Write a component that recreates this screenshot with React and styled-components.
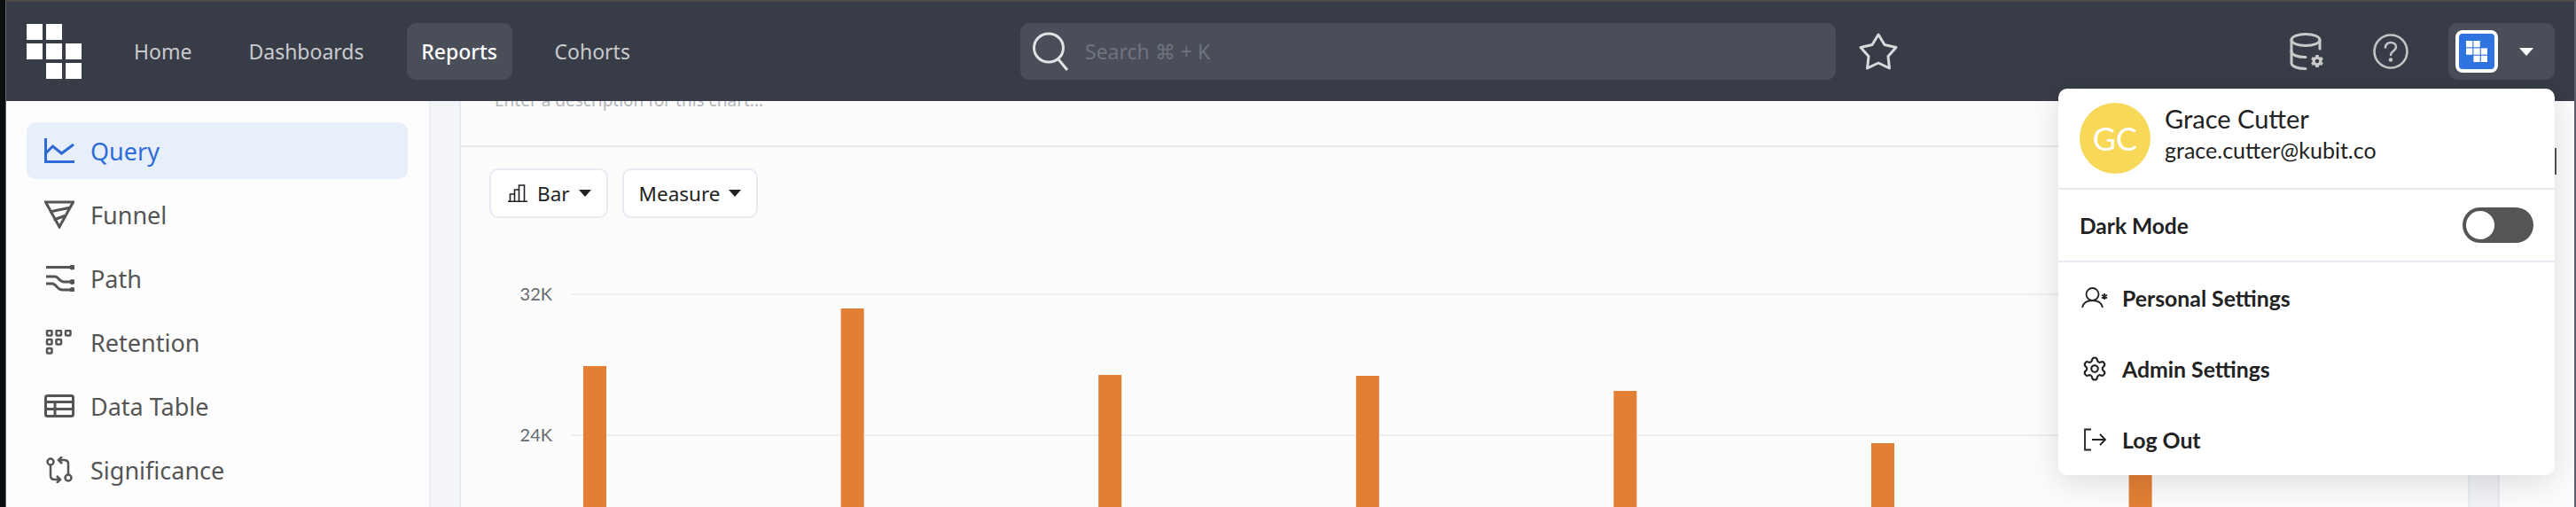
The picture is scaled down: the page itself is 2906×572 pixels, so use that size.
import { Settings } from "lucide-react"
import styled, { createGlobalStyle } from "styled-components"

const GlobalStyle = createGlobalStyle`
html, body {
  margin: 0;
  padding: 0;
  background: #000;
}
* {
  box-sizing: border-box;
}
`

const Page = styled.div`
position: relative;
width: 2906px;
height: 572px;
overflow: hidden;
padding-left: 6px;
background-color: #0c0d0e;
font-family: "Noto Sans", sans-serif;
`
const Win = styled.div`
display: flex;
flex-direction: column;
height: 100%;
border-top: 2px solid #4a4a42;
border-left: 1px solid #60646c;
border-right: 2px solid #5c606a;
`
const NavBar = styled.header`
display: flex;
align-items: center;
flex: 0 0 112px;
padding: 0 22px 0 23px;
background-color: #383c47;
`
const NavLeft = styled.div`
display: flex;
align-items: center;
flex: 0 0 1121px;
`
const NavItems = styled.nav`
display: flex;
gap: 32px;
margin-left: 43px;
`
const NavItem = styled.a`
display: flex;
align-items: center;
justify-content: center;
height: 64px;
min-width: ${p => (p.$active ? "119px" : "auto")};
padding: 0 16px;
border-radius: 10px;
font-size: 23px;
font-weight: ${p => (p.$active ? 500 : 400)};
color: ${p => (p.$active ? "#ffffff" : "#c9cbcf")};
background-color: ${p => (p.$active ? "#4a4e59" : "transparent")};
`
const SearchBar = styled.div`
display: flex;
align-items: center;
flex: 0 0 920px;
height: 64px;
padding-left: 14px;
border-radius: 10px;
background-color: #4a4e59;
`
const SearchText = styled.span`
margin-left: 17px;
font-size: 23px;
color: #6f737d;
`
const StarBtn = styled.svg`
margin-left: 26px;
`
const NavRight = styled.div`
display: flex;
align-items: center;
margin-left: auto;
`
const IconSlot = styled.div`
display: flex;
margin-right: ${p => p.$gap}px;
`
const UserPill = styled.div`
display: flex;
align-items: center;
width: 120px;
height: 64px;
padding-left: 8px;
border-radius: 10px;
background-color: #4a4e59;
`
const LogoTile = styled.div`
display: flex;
align-items: center;
justify-content: center;
width: 48px;
height: 48px;
border: 4px solid #ffffff;
border-radius: 8px;
background-color: #2f73e0;
`
const WhiteCaret = styled.span`
margin-left: 24px;
border-left: 8px solid transparent;
border-right: 8px solid transparent;
border-top: 9px solid #ffffff;
`

const Body = styled.main`
display: flex;
flex: 1;
min-height: 0;
`
const Sidebar = styled.aside`
flex: 0 0 479px;
padding: 24px 24px 0 23px;
border-right: 2px solid #eceef3;
background-color: #fdfdfd;
`
const SideItem = styled.a`
display: flex;
align-items: center;
height: 64px;
margin-bottom: 8px;
padding-left: 20px;
border-radius: 10px;
font-size: 27px;
color: ${p => (p.$active ? "#2f6bd6" : "#555555")};
background-color: ${p => (p.$active ? "#e7effa" : "transparent")};
`
const SideIcon = styled.svg`
flex: 0 0 34px;
margin-right: 18px;
fill: none;
stroke: currentColor;
stroke-width: 3;
`
const Gutter = styled.div`
flex: 0 0 34px;
border-right: 2px solid #e8eaf2;
background-color: #f4f5f8;
`
const Card = styled.section`
flex: 0 0 2264px;
overflow: hidden;
background-color: #fcfcfc;
`
const DescArea = styled.div`
display: flex;
height: 52px;
padding-left: 38px;
border-bottom: 2px solid #e8eaf2;
`
const Desc = styled.div`
margin-top: -16px;
line-height: 30px;
font-size: 19px;
color: #b4b6ba;
`
const Toolbar = styled.div`
display: flex;
gap: 16px;
padding: 24px 32px 0;
`
const ToolButton = styled.button`
display: flex;
align-items: center;
height: 56px;
padding: 0 17px;
border: 2px solid #e8eaf2;
border-radius: 10px;
background-color: #ffffff;
font-family: "Noto Sans", sans-serif;
font-size: 22.5px;
color: #222222;
`
const DarkCaret = styled.span`
margin-left: 10px;
border-left: 7px solid transparent;
border-right: 7px solid transparent;
border-top: 8px solid #222222;
`
const BarGlyph = styled.svg`
margin: 0 11px 0 2px;
fill: none;
stroke: #222222;
stroke-width: 1.6;
`
const Chart = styled.svg`
display: block;
`
const AxisLabel = styled.text`
font-family: "Lato", sans-serif;
font-size: 20px;
fill: #666a70;
`
const RightGutter = styled(Gutter)`
flex-basis: 36px;
border-left: 2px solid #e8eaf2;
border-right: 2px solid #e8eaf2;
background-color: #f1f2f5;
`
const RightPanel = styled.div`
flex: 1;
padding: 53px 0 0 24px;
background-color: #fcfcfc;
`
const Handle = styled.div`
width: 40px;
height: 30px;
background-color: #555555;
`

const Menu = styled.div`
position: absolute;
top: 100px;
right: 24px;
width: 560px;
height: 436px;
border-radius: 10px;
background-color: #ffffff;
box-shadow: 0 8px 36px rgba(0, 0, 0, 0.13);
font-family: "Lato", sans-serif;
color: #222222;
`
const UserRow = styled.div`
display: flex;
align-items: center;
height: 114px;
padding: 0 24px;
border-bottom: 2px solid #e8eaf2;
`
const Avatar = styled.div`
display: flex;
align-items: center;
justify-content: center;
width: 80px;
height: 80px;
border-radius: 50%;
background-color: #f7d858;
font-size: 36px;
color: #ffffff;
`
const UserInfo = styled.div`
margin-left: 16px;
padding-bottom: 10px;
`
const UserName = styled.div`
font-size: 29px;
line-height: 36px;
`
const UserMail = styled.div`
font-size: 25px;
line-height: 34px;
`
const ThemeRow = styled.div`
display: flex;
align-items: center;
justify-content: space-between;
height: 82px;
padding: 0 24px;
border-bottom: 2px solid #e8eaf2;
font-size: 24.5px;
font-weight: 700;
`
const Toggle = styled.div`
display: flex;
align-items: center;
width: 80px;
height: 40px;
padding-left: 4px;
border-radius: 20px;
background-color: #555555;
`
const Knob = styled.div`
width: 32px;
height: 32px;
border-radius: 50%;
background-color: #ffffff;
`
const MenuItem = styled.a`
display: flex;
align-items: center;
height: 80px;
padding-left: 25px;
font-size: 24.8px;
font-weight: 700;
`
const MenuIcon = styled.div`
display: flex;
justify-content: center;
flex: 0 0 32px;
margin-right: 15px;
`

const Logo = ({ size, cell, pitch }) => (
  <svg width={size} height={size} viewBox={`0 0 ${size} ${size}`} fill="#ffffff">
    {[[0, 0], [1, 0], [0, 1], [1, 1], [2, 1], [1, 2], [2, 2]].map(([c, r]) => (
      <rect key={`${c}-${r}`} x={c * pitch} y={r * pitch} width={cell} height={cell} />
    ))}
  </svg>
)

const SearchIcon = () => (
  <svg width="42" height="44" viewBox="0 0 42 44" fill="none" stroke="#e2e3e4" strokeWidth="3">
    <ellipse cx="18" cy="18" rx="16.5" ry="16" />
    <path d="M29 31l10 12" />
  </svg>
)

const DbIcon = () => (
  <svg width="40" height="42" viewBox="0 0 40 42" fill="none" stroke="#c9c9c9" strokeWidth="3" strokeLinecap="round">
    <ellipse cx="18" cy="8" rx="16" ry="6.500" />
    <path d="M34 8v10M2 8v26c0 4 7 6.500 16 6.500" />
    <path d="M2 21c0 4 7 6.500 16 6.500" />
    <path d="M31 25v14M25 28.500l12 7M37 28.500l-12 7" strokeWidth="3.600" strokeLinecap="butt" />
    <circle cx="31" cy="32" r="5.500" fill="#c9c9c9" stroke="none" />
    <circle cx="31" cy="32" r="2.300" fill="#383c47" stroke="none" />
  </svg>
)

const HelpIcon = () => (
  <svg width="40" height="40" viewBox="0 0 40 40" fill="none" stroke="#c4c4c4" strokeWidth="2.600" strokeLinecap="round">
    <circle cx="20" cy="20" r="18.500" />
    <path d="M14 15.500c0-3.500 2.800-5.500 6-5.500s6 2 6 5c0 4.500-6 4.500-6 9" />
    <circle cx="20" cy="29.500" r="1" fill="#c4c4c4" />
  </svg>
)

const sideItems = [
  {
    label: "Query",
    h: 28,
    icon: <path d="M1.500 0v26.500H34M1.500 17l8-8 10 8L33 7" />,
  },
  {
    label: "Funnel",
    h: 32,
    icon: <path d="M1.500 2h31L17 30zM6 13l24-5M10.500 22l14-5" />,
  },
  {
    label: "Path",
    h: 30,
    icon: (
      <g transform="translate(2 0)">
        <path d="M0 2.500h30M0 13h10c4 0 5 6 10 6h10M0 21h7c4 0 6 7 11 7h12" />
        <circle cx="29.500" cy="2.500" r="1.500" />
        <circle cx="29.500" cy="19" r="1.500" />
        <circle cx="29.500" cy="28" r="1.500" />
      </g>
    ),
  },
  {
    label: "Retention",
    h: 28,
    icon: (
      <g strokeWidth="2.500" transform="translate(3 1)">
        {[[0, 0], [10.500, 0], [21, 0], [0, 10], [10.500, 10], [0, 20]].map(([x, y]) => (
          <rect key={`${x}-${y}`} x={x} y={y} width="5.500" height="5.500" rx="1" />
        ))}
      </g>
    ),
  },
  {
    label: "Data Table",
    h: 26,
    icon: (
      <g>
        <rect x="1.500" y="1.500" width="31" height="23" rx="2" />
        <path d="M1.500 8.500h31M1.500 16.500h31M12 8.500v16" />
      </g>
    ),
  },
  {
    label: "Significance",
    h: 30,
    icon: (
      <g strokeWidth="2.500" transform="translate(2 1)">
        <circle cx="5" cy="5" r="3.500" />
        <circle cx="25" cy="23" r="3.500" />
        <path d="M5 9v12c0 3 2 4 5 4h6M12 21l4 4-4 4M25 19V7c0-3-2-4-5-4h-6M18 7l-4-4 4-4" />
      </g>
    ),
  },
]

const bars = [167, 102, 177, 178, 195, 254, 150]
const ticks = [{ y: 86, label: "32K" }, { y: 245, label: "24K" }]

const App = () => {
  return (
    <Page>
      <GlobalStyle />
      <Win>
        <NavBar>
          <NavLeft>
            <Logo size={62} cell={18} pitch={22} />
            <NavItems>
              <NavItem>Home</NavItem>
              <NavItem>Dashboards</NavItem>
              <NavItem $active>Reports</NavItem>
              <NavItem>Cohorts</NavItem>
            </NavItems>
          </NavLeft>
          <SearchBar>
            <SearchIcon />
            <SearchText>Search ⌘ + K</SearchText>
          </SearchBar>
          <StarBtn width="44" height="42" viewBox="0 0 44 42" fill="none" stroke="#d8d9db" strokeWidth="3" strokeLinejoin="round">
            <path d="M22 2l7 11.500 13 3-9 10 1.500 13.500L22 34 9.500 40 11 26.500l-9-10 13-3z" />
          </StarBtn>
          <NavRight>
            <IconSlot $gap={54}><DbIcon /></IconSlot>
            <IconSlot $gap={45}><HelpIcon /></IconSlot>
            <UserPill>
              <LogoTile><Logo size={24} cell={7.3} pitch={8.4} /></LogoTile>
              <WhiteCaret />
            </UserPill>
          </NavRight>
        </NavBar>
        <Body>
          <Sidebar>
            {sideItems.map((item, i) => (
              <SideItem key={item.label} $active={i === 0}>
                <SideIcon width="34" height={item.h} viewBox={`0 0 34 ${item.h}`}>{item.icon}</SideIcon>
                {item.label}
              </SideItem>
            ))}
          </Sidebar>
          <Gutter />
          <Card>
            <DescArea>
              <Desc>Enter a description for this chart...</Desc>
            </DescArea>
            <Toolbar>
              <ToolButton>
                <BarGlyph width="22" height="20" viewBox="0 0 22 20">
                  <path d="M0 19.200h22M2.500 19V11h5v8M7.500 19V6h5v13M12.500 19V1h6v18" />
                </BarGlyph>
                Bar<DarkCaret />
              </ToolButton>
              <ToolButton>Measure<DarkCaret /></ToolButton>
            </Toolbar>
            <Chart width="2264" height="326" viewBox="0 0 2264 326">
              {ticks.map(t => (
                <g key={t.label}>
                  <line x1="124" x2="2250" y1={t.y} y2={t.y} stroke="#eceef4" strokeWidth="2" />
                  <AxisLabel x="103" y={t.y + 7} textAnchor="end">{t.label}</AxisLabel>
                </g>
              ))}
              {bars.map((top, i) => (
                <rect key={i} x={138 + i * 290.6} y={top} width="26" height={326 - top} fill="#e27f35" />
              ))}
            </Chart>
          </Card>
          <RightGutter />
          <RightPanel><Handle /></RightPanel>
        </Body>
      </Win>
      <Menu>
        <UserRow>
          <Avatar>GC</Avatar>
          <UserInfo>
            <UserName>Grace Cutter</UserName>
            <UserMail>grace.cutter@kubit.co</UserMail>
          </UserInfo>
        </UserRow>
        <ThemeRow>
          Dark Mode
          <Toggle><Knob /></Toggle>
        </ThemeRow>
        <MenuItem>
          <MenuIcon>
            <svg width="30" height="24" viewBox="0 0 30 24" fill="none" stroke="#222222" strokeWidth="1.800">
              <circle cx="12.500" cy="8" r="7" />
              <path d="M1 23c1-5 5-8 11.500-8S23 18 24 23" />
              <path d="M26 7v7M23 8.700l6 3.500M29 8.700l-6 3.500" />
            </svg>
          </MenuIcon>
          Personal Settings
        </MenuItem>
        <MenuItem>
          <MenuIcon><Settings size={30} strokeWidth={1.7} color="#222222" /></MenuIcon>
          Admin Settings
        </MenuItem>
        <MenuItem>
          <MenuIcon>
            <svg width="26" height="26" viewBox="0 0 26 26" fill="none" stroke="#222222" strokeWidth="1.800">
              <path d="M9 1.500H2v23h7M10 13h15M19 7l6 6-6 6" />
            </svg>
          </MenuIcon>
          Log Out
        </MenuItem>
      </Menu>
    </Page>
  )
}

export default App
